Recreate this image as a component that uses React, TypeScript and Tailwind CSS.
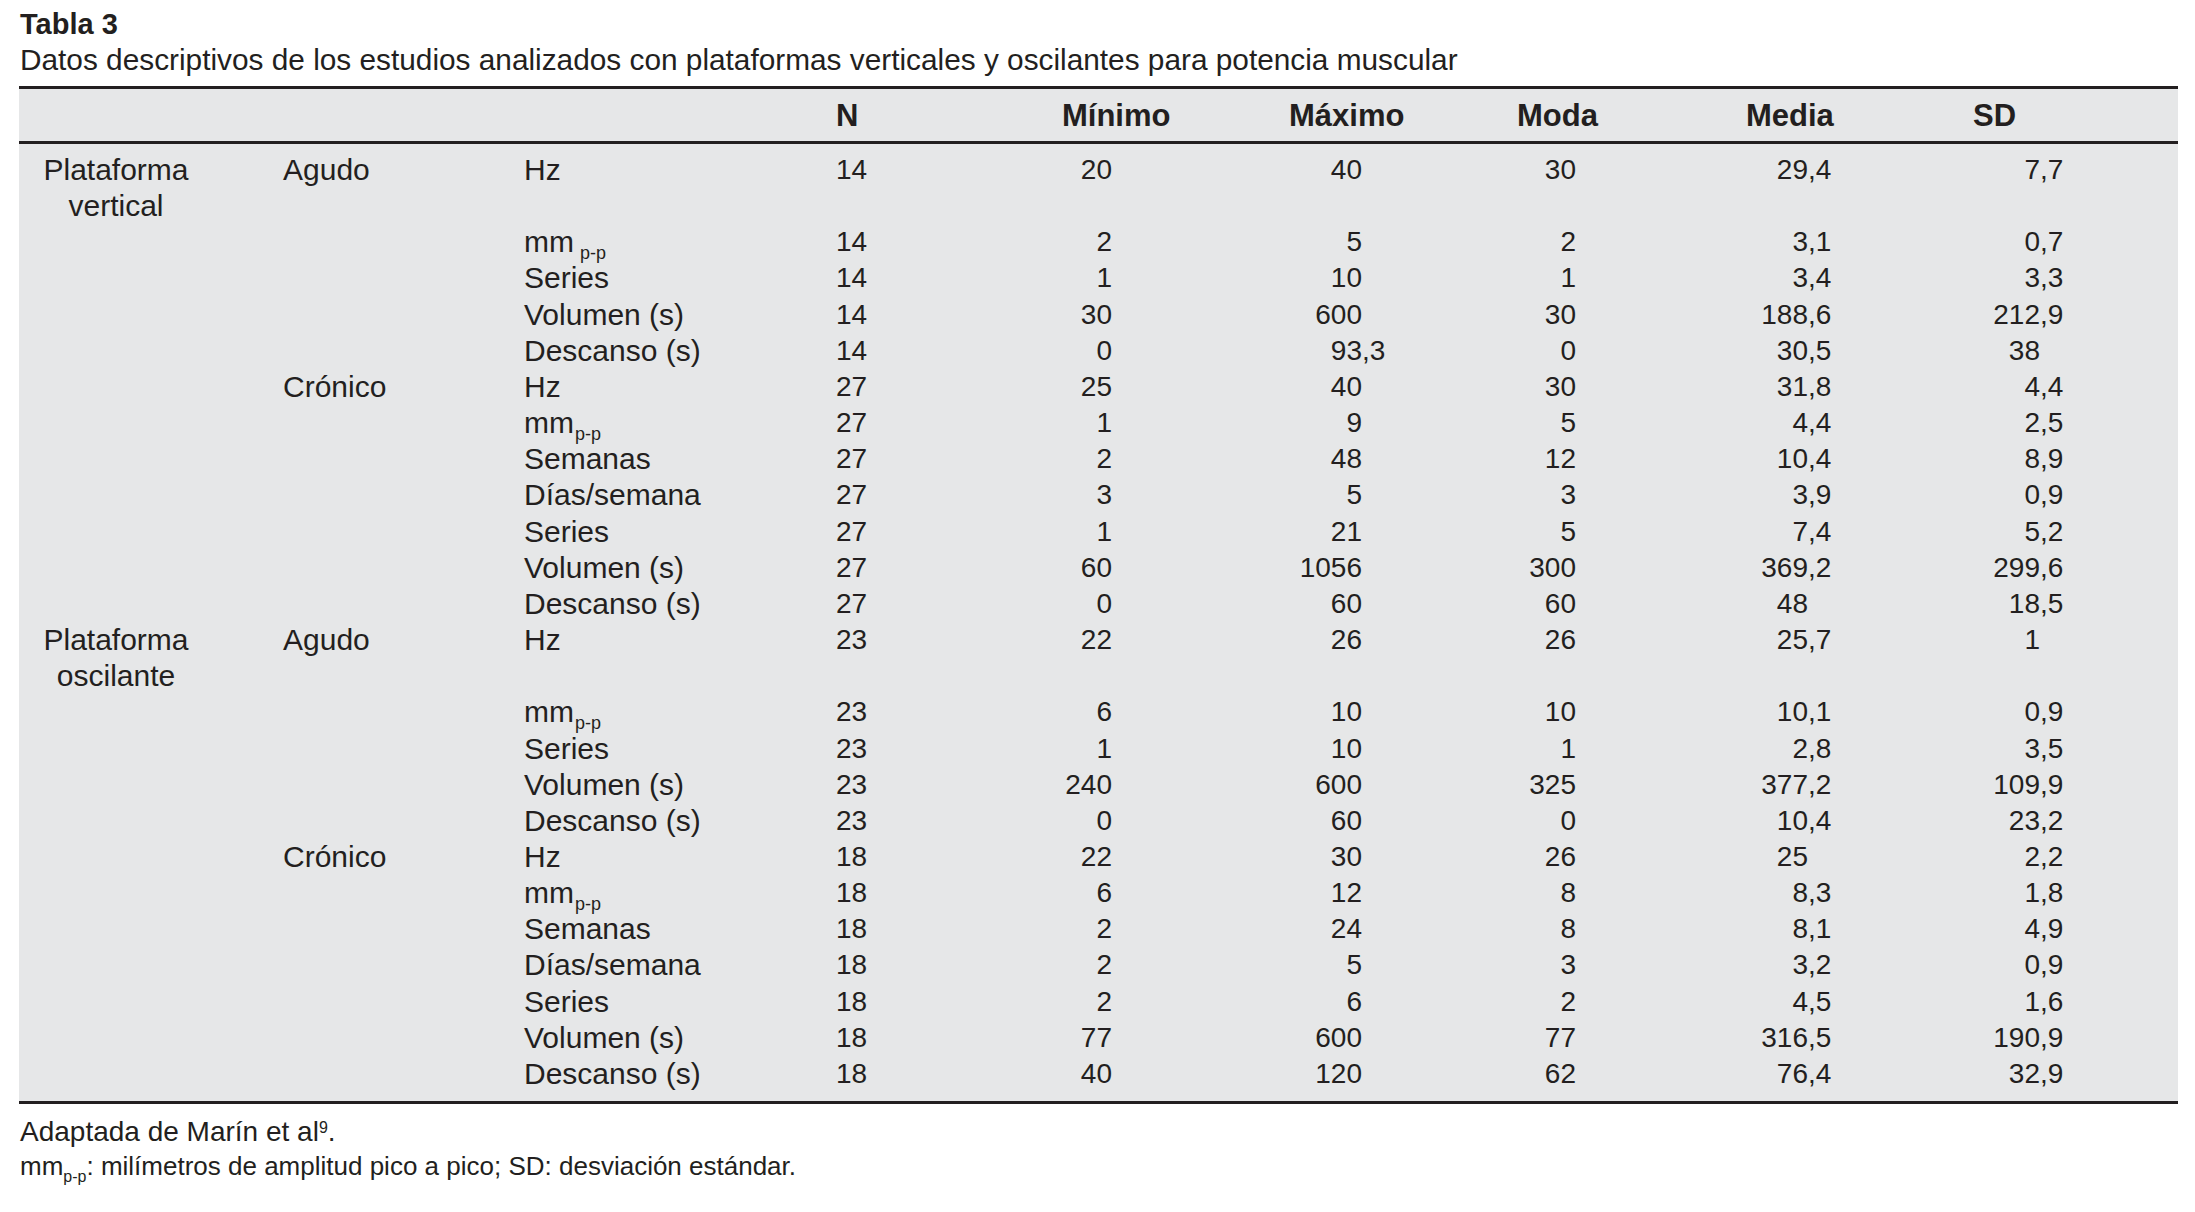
const FONT = "font-['Liberation_Sans',Arial,sans-serif]";

type Row = { label: string; mm?: "gap" | "tight"; values: string[] };
type Phase = { name: string; rows: Row[] };
type Group = { platform: [string, string]; phases: Phase[] };

const GROUPS: Group[] = [
  {
    platform: ["Plataforma", "vertical"],
    phases: [
      {
        name: "Agudo",
        rows: [
          { label: "Hz", values: ["14", "20", "40", "30", "29,4", "7,7"] },
          { label: "mm", mm: "gap", values: ["14", "2", "5", "2", "3,1", "0,7"] },
          { label: "Series", values: ["14", "1", "10", "1", "3,4", "3,3"] },
          { label: "Volumen (s)", values: ["14", "30", "600", "30", "188,6", "212,9"] },
          { label: "Descanso (s)", values: ["14", "0", "93,3", "0", "30,5", "38"] },
        ],
      },
      {
        name: "Crónico",
        rows: [
          { label: "Hz", values: ["27", "25", "40", "30", "31,8", "4,4"] },
          { label: "mm", mm: "tight", values: ["27", "1", "9", "5", "4,4", "2,5"] },
          { label: "Semanas", values: ["27", "2", "48", "12", "10,4", "8,9"] },
          { label: "Días/semana", values: ["27", "3", "5", "3", "3,9", "0,9"] },
          { label: "Series", values: ["27", "1", "21", "5", "7,4", "5,2"] },
          { label: "Volumen (s)", values: ["27", "60", "1056", "300", "369,2", "299,6"] },
          { label: "Descanso (s)", values: ["27", "0", "60", "60", "48", "18,5"] },
        ],
      },
    ],
  },
  {
    platform: ["Plataforma", "oscilante"],
    phases: [
      {
        name: "Agudo",
        rows: [
          { label: "Hz", values: ["23", "22", "26", "26", "25,7", "1"] },
          { label: "mm", mm: "tight", values: ["23", "6", "10", "10", "10,1", "0,9"] },
          { label: "Series", values: ["23", "1", "10", "1", "2,8", "3,5"] },
          { label: "Volumen (s)", values: ["23", "240", "600", "325", "377,2", "109,9"] },
          { label: "Descanso (s)", values: ["23", "0", "60", "0", "10,4", "23,2"] },
        ],
      },
      {
        name: "Crónico",
        rows: [
          { label: "Hz", values: ["18", "22", "30", "26", "25", "2,2"] },
          { label: "mm", mm: "tight", values: ["18", "6", "12", "8", "8,3", "1,8"] },
          { label: "Semanas", values: ["18", "2", "24", "8", "8,1", "4,9"] },
          { label: "Días/semana", values: ["18", "2", "5", "3", "3,2", "0,9"] },
          { label: "Series", values: ["18", "2", "6", "2", "4,5", "1,6"] },
          { label: "Volumen (s)", values: ["18", "77", "600", "77", "316,5", "190,9"] },
          { label: "Descanso (s)", values: ["18", "40", "120", "62", "76,4", "32,9"] },
        ],
      },
    ],
  },
];

// int part box width per numeric column, and whether a decimal slot follows it
const NUM_COLS = [
  { intW: "w-[29px]", frac: false },
  { intW: "w-[50px]", frac: false },
  { intW: "w-[73px]", frac: true },
  { intW: "w-[59px]", frac: false },
  { intW: "w-[62px]", frac: true },
  { intW: "w-[67px]", frac: true },
];

const GRID =
  "grid grid-cols-[264px_241px_312px_226px_227px_228px_229px_227px_1fr]";

function Mm({ gap }: { gap?: boolean }) {
  return (
    <span>
      mm
      <sub className={`text-[18px] bottom-[-7px] ${gap ? "ml-[6px]" : "ml-[1px]"}`}>p-p</sub>
    </span>
  );
}

function NumCell({ value, col }: { value: string; col: number }) {
  const spec = NUM_COLS[col];
  const [int, dec] = value.split(",");
  return (
    <div className="flex text-[28px]">
      <span className={`${spec.intW} text-right`}>{int}</span>
      {spec.frac ? <span className="w-[23px]">{dec ? `,${dec}` : ""}</span> : null}
    </div>
  );
}

export default function App() {
  return (
    <div className={`${FONT} min-h-screen bg-white pl-[19px] pt-[6px] text-[#231f20]`}>
      <h1 className="pl-[1px] text-[29px] font-bold leading-[36px]">Tabla 3</h1>
      <p className="pl-[1px] text-[29.8px] leading-[35px]">
        Datos descriptivos de los estudios analizados con plataformas verticales y oscilantes para potencia muscular
      </p>

      <div className="mt-[9px] w-[2159px] border-y-[3px] border-[#231f20] bg-[#e6e7e8]">
        <div className={`${GRID} h-[55px] items-center border-b-[3px] border-[#231f20] pt-[3px] text-[31px] font-bold`}>
          <div />
          <div />
          <div />
          <div>N</div>
          <div>Mínimo</div>
          <div>Máximo</div>
          <div>Moda</div>
          <div>Media</div>
          <div>SD</div>
        </div>

        <div className="pt-[8px] pb-[9px] text-[30px] leading-[36.15px]">
          {GROUPS.map((g) =>
            g.phases.map((p, pi) =>
              p.rows.map((r, ri) => {
                const first = pi === 0 && ri === 0;
                return (
                  <div key={`${g.platform[1]}-${p.name}-${ri}`} className={GRID}>
                    <div className="w-[194px] text-center">
                      {first ? (
                        <>
                          <div>{g.platform[0]}</div>
                          <div>{g.platform[1]}</div>
                        </>
                      ) : null}
                    </div>
                    <div>{ri === 0 ? p.name : ""}</div>
                    <div>{r.mm ? <Mm gap={r.mm === "gap"} /> : r.label}</div>
                    {r.values.map((v, ci) => (
                      <NumCell key={ci} value={v} col={ci} />
                    ))}
                  </div>
                );
              })
            )
          )}
        </div>
      </div>

      <div className="mt-[11px] pl-[1px] leading-[34px]">
        <p className="text-[28px]">
          Adaptada de Marín et al<sup className="text-[16px]">9</sup>.
        </p>
        <p className="text-[26px]">
          mm<sub className="text-[16px] bottom-[-7px]">p-p</sub>: milímetros de amplitud pico a pico; SD: desviación estándar.
        </p>
      </div>
    </div>
  );
}
